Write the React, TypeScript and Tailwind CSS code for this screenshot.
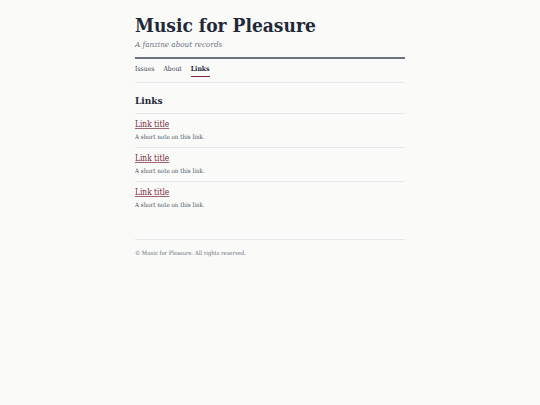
const links = [
  { title: 'Link title', note: 'A short note on this link.' },
  { title: 'Link title', note: 'A short note on this link.' },
  { title: 'Link title', note: 'A short note on this link.' },
]

export default function App() {
  return (
    <div className="min-h-[405px] bg-[#fafaf9] text-[#1f2937]" style={{ fontFamily: '"DejaVu Serif Condensed", "DejaVu Serif", serif' }}>
      <div className="mx-auto w-[270px] pt-[13px]">
        <header className="border-b-2 border-[#6b7280] pb-[7px]">
          <h1 className="text-[19px] font-bold leading-[24px]">Music for Pleasure</h1>
          <p className="mt-[2px] text-[8px] italic leading-[11px] text-[#6b7280]">A fanzine about records</p>
        </header>
        <nav className="flex gap-[9px] border-b border-[#e5e7eb] pt-[5px] pb-[5px] text-[6.8px] leading-[10px] text-[#374151]">
          <a className="border-b border-transparent pb-[2px]">Issues</a>
          <a className="border-b border-transparent pb-[2px]">About</a>
          <a className="border-b border-[#7a2838] pb-[2px] font-bold text-[#1f2937]">Links</a>
        </nav>
        <main className="pt-[11px]">
          <h2 className="border-b border-[#e5e7eb] pb-[5px] text-[10px] font-bold leading-[14px]">Links</h2>
          <ul>
            {links.map((link, i) => (
              <li className="border-b border-[#e5e7eb] pt-[4px] pb-[6px] last:border-b-0" key={i}>
                <a className="block text-[8.3px] leading-[12px] text-[#7a2838] underline decoration-[#7a2838]/70">{link.title}</a>
                <p className="mt-[2px] text-[6.2px] leading-[9px] text-[#4b5563]">{link.note}</p>
              </li>
            ))}
          </ul>
        </main>
        <footer className="mt-[24px] border-t border-[#e5e7eb] pt-[9px] text-[5.8px] leading-[9px] text-[#6b7280]">
          © Music for Pleasure. All rights reserved.
        </footer>
      </div>
    </div>
  )
}
